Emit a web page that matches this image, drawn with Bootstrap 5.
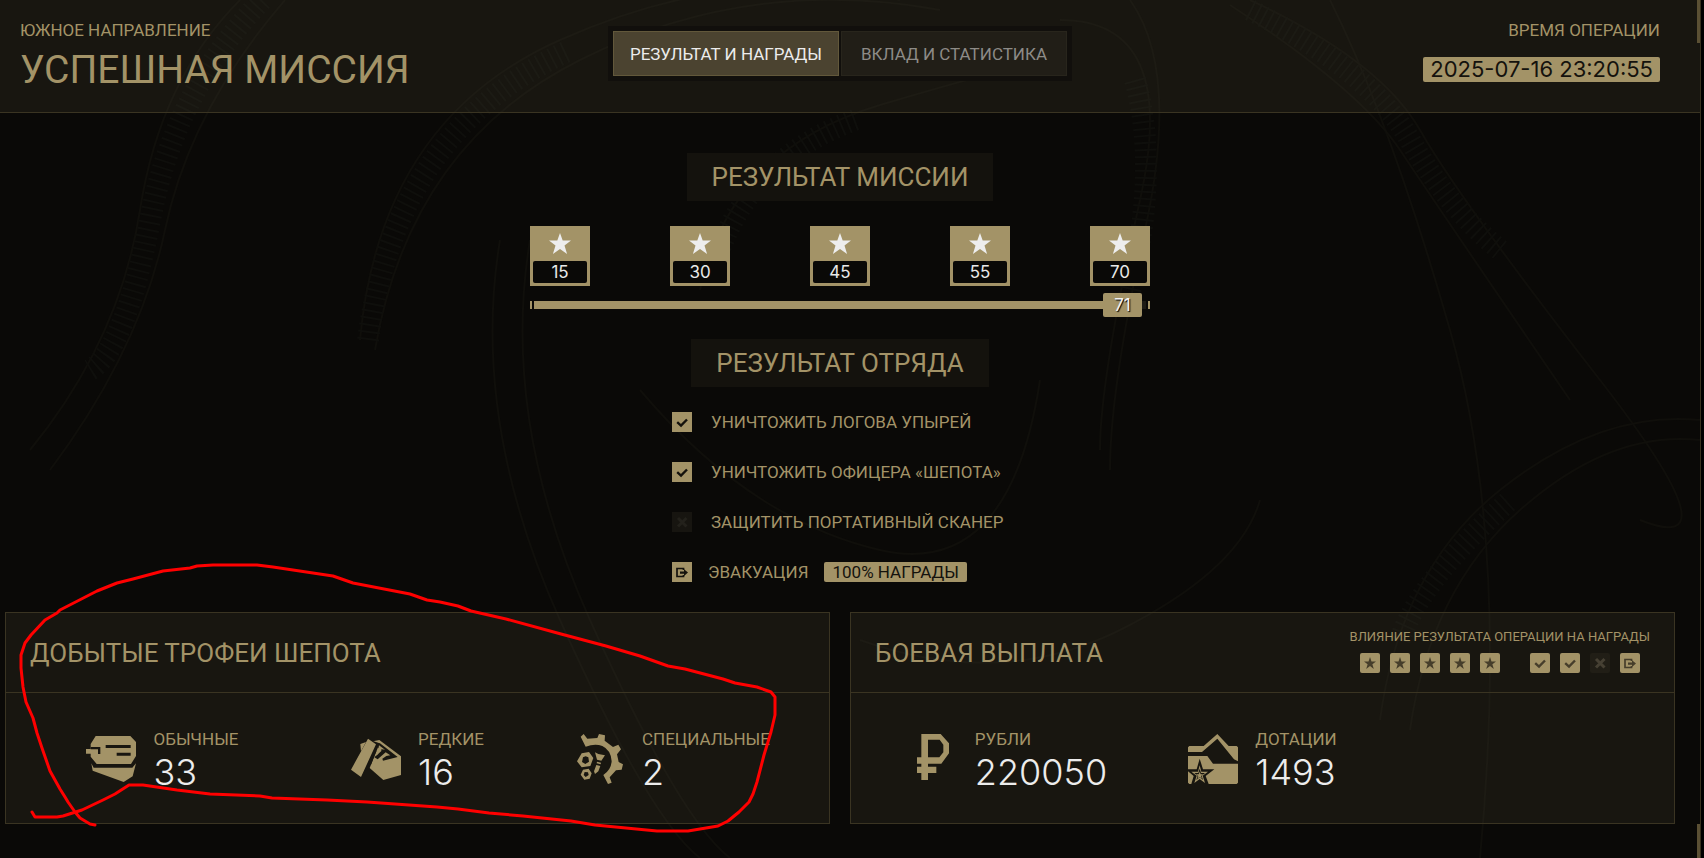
<!DOCTYPE html>
<html lang="ru" data-bs-theme="dark">
<head>
<meta charset="utf-8">
<meta name="viewport" content="width=device-width, initial-scale=1">
<title>Успешная миссия</title>
<link rel="stylesheet" href="https://cdn.jsdelivr.net/npm/bootstrap@5.3.0/dist/css/bootstrap.min.css">
<style>
:root { --tan:#a39367; --ink:#0a0907; --line:#3a3422; }
body { background:#000; color:var(--tan); font-family:Roboto,"Liberation Sans",sans-serif; font-size:17px; line-height:20px; }
h1, h2 { color:var(--tan); font-weight:400; }
.frame { background:var(--ink); border-right:1px solid #38311f; margin-right:3px; isolation:isolate; }
.scenery { z-index:-1; width:100%; height:100%; }
.edge { right:0; width:3px; background:#5b5034; }
.edge-top { top:0; height:43px; }
.edge-bottom { bottom:0; height:34px; }
.topbar { background:rgba(163,152,110,.09); border-bottom:1px solid var(--line); height:113px; padding:20px 40px 0 20px; }
.side { flex:1 1 0; }
.mission-name { font-size:39px; line-height:44px; font-weight:400; margin:8px 0 0; white-space:nowrap; }
.tabs { background:#110f0c; padding:5px; gap:2px; margin-top:6px; }
.tabs .btn { width:226px; height:45px; padding:0; border:1px solid #28251c; border-radius:0; background:#211e17; color:#8d8b87; font-size:17px; line-height:20px; }
.tabs .btn.active { background:#4b4330; border-color:#62583b; color:#ececec; }
.plate { background:var(--tan); color:#14120d; border-radius:2px; }
.digits { font-family:Inter,"Liberation Sans",sans-serif; }
.stamp { font-size:22px; line-height:25px; padding:0 7px; margin-top:17px; }
main { padding:40px 25px 33px 5px; }
.heading { background:#14120d; font-size:26px; line-height:48px; margin:0; padding:0 25px; }
.squad { margin-top:22px; }
.score { width:620px; }
.stars { margin-top:25px; }
.star-box { width:60px; height:60px; background:var(--tan); padding:0 3px 3px; }
.star-box svg { width:36px; height:35px; color:#ededed; }
.star-box span { background:var(--ink); color:#e9e9e9; border-radius:2px; height:22px; line-height:22px; }
.rail { height:24px; margin-top:7px; gap:2px; }
.tick { width:2px; height:8px; background:var(--tan); }
.rail .progress { height:8px; border-radius:0; background:#1d1b15; overflow:visible; }
.rail .progress-bar { background:var(--tan); overflow:visible; }
.marker { right:8px; top:0; width:39px; line-height:24px; color:#f2f2f2; text-shadow:1px 1px 1px #000; }
.goals { width:336px; gap:30px; margin-top:25px; }
.goals li { height:20px; white-space:nowrap; }
.goals .state { margin-right:19px; }
.state { width:20px; height:20px; background:var(--tan); color:#14120d; flex:none; display:block; }
.state.off { background:#171510; color:#23211b; }
.small-state { border-radius:2px; color:#463e2b; }
.small-state.off { background:#211e16; color:#464033; }
.panels { gap:20px; margin-top:30px; }
.panel { flex:1 1 0; background:rgba(163,152,110,.09); border:1px solid var(--line); height:212px; }
.panel-top { height:80px; border-bottom:1px solid var(--line); padding:0 24px; }
.panel-top h2 { font-size:26px; line-height:32px; margin:0; }
.effects { font-size:13px; line-height:16px; padding-bottom:4px; }
.icons { gap:10px; margin-top:8px; }
.icons .group-end { margin-right:20px; }
.loot { padding:36px 29px 0; }
.loot > div { flex:0 0 33.333%; gap:17px; }
.loot svg { width:50px; height:50px; margin-top:5px; flex:none; fill:var(--tan); }
.loot .cut { fill:#181610; }
.amount { font-size:36px; line-height:36px; color:#ececec; font-weight:300; margin-top:5px; }
.scribble { left:0; top:552px; pointer-events:none; }
</style>
</head>
<body>
<svg class="d-none" aria-hidden="true">
  <symbol id="star" viewBox="0 0 20 20"><path fill="currentColor" d="M10 4l1.500 4.400H16l-3.600 2.800 1.400 4.800L10 13.100 6.200 16l1.400-4.800L4 8.400h4.500z"/></symbol>
  <symbol id="bigstar" viewBox="0 0 36 35"><path fill="currentColor" d="M18 7l2.700 7.600H29l-6.500 5 2.600 8.400L18 23l-7.100 5 2.600-8.400-6.500-5h8.300z"/></symbol>
  <symbol id="check" viewBox="0 0 20 20"><path fill="none" stroke="currentColor" stroke-width="2.400" d="M5.200 10.200L9 13.600 15 7.500"/></symbol>
  <symbol id="cross" viewBox="0 0 20 20"><path fill="none" stroke="currentColor" stroke-width="3" d="M6 6l8.500 8.500M14.500 6L6 14.500"/></symbol>
  <symbol id="exit" viewBox="0 0 20 20"><path fill="none" stroke="currentColor" stroke-width="1.700" d="M11.500 8V6.500H5v8h6.500V13"/><path fill="currentColor" d="M8 9.500h4V7.300l4 3.300-4 3.300v-2.200H8z"/></symbol>
</svg>

<div class="frame position-relative min-vh-100">
  <svg class="scenery position-absolute top-0 start-0" viewBox="0 0 1700 858" preserveAspectRatio="xMidYMid slice" fill="none" aria-hidden="true">
    <g stroke="#100f0b" stroke-width="2">
      <path d="M240 0Q160 80 140 210T30 450M285 0Q190 110 165 230T50 470"/>
      <path d="M360 340Q380 120 560 40T900 0M375 350Q410 145 580 60T940 10"/>
      <path d="M700 290Q730 150 880 105T1060 60M1130 0Q1180 70 1145 230T1110 470"/>
      <path d="M1060 20Q1180 20 1140 200T1100 450M1330 0Q1390 120 1450 330T1480 858"/>
      <path d="M1250 0Q1380 60 1420 130T1600 380 1640 520M1230 5Q1360 90 1400 150T1570 400"/>
      <path d="M1380 720Q1400 570 1500 490T1700 420M1410 730Q1430 590 1520 510T1700 440"/>
      <path d="M500 240Q470 420 560 620T700 858M530 240Q500 420 590 620T730 858"/>
      <path d="M640 390Q750 520 880 550T1040 380M860 640Q1000 690 1120 630T1260 500"/>
    </g>
    <g stroke="#0f0f0c" stroke-width="22" stroke-dasharray="2 5">
      <path d="M262 0Q175 90 150 220T90 370M368 340Q395 130 570 50"/>
      <path d="M1250 10Q1370 70 1410 140T1500 250M1400 640Q1420 580 1510 500"/>
      <path d="M1135 80Q1160 170 1128 300M710 280Q740 160 860 118"/>
    </g>
  </svg>
  <div class="edge edge-top position-absolute"></div>
  <div class="edge edge-bottom position-absolute"></div>

  <header class="topbar d-flex align-items-start">
    <div class="side">
      <div>ЮЖНОЕ НАПРАВЛЕНИЕ</div>
      <h1 class="mission-name">УСПЕШНАЯ МИССИЯ</h1>
    </div>
    <div class="tabs d-flex">
      <button type="button" class="btn active" aria-current="page">РЕЗУЛЬТАТ И НАГРАДЫ</button>
      <button type="button" class="btn">ВКЛАД И СТАТИСТИКА</button>
    </div>
    <div class="side d-flex flex-column align-items-end">
      <div>ВРЕМЯ ОПЕРАЦИИ</div>
      <time class="plate stamp digits" datetime="2025-07-16T23:20:55">2025-07-16 23:20:55</time>
    </div>
  </header>

  <main>
    <div class="d-flex flex-column align-items-center">
      <h2 class="heading">РЕЗУЛЬТАТ МИССИИ</h2>
      <div class="score">
        <div class="stars d-flex justify-content-between">
          <div class="star-box d-flex flex-column justify-content-between"><svg class="mx-auto"><use href="#bigstar"/></svg><span class="digits text-center">15</span></div>
          <div class="star-box d-flex flex-column justify-content-between"><svg class="mx-auto"><use href="#bigstar"/></svg><span class="digits text-center">30</span></div>
          <div class="star-box d-flex flex-column justify-content-between"><svg class="mx-auto"><use href="#bigstar"/></svg><span class="digits text-center">45</span></div>
          <div class="star-box d-flex flex-column justify-content-between"><svg class="mx-auto"><use href="#bigstar"/></svg><span class="digits text-center">55</span></div>
          <div class="star-box d-flex flex-column justify-content-between"><svg class="mx-auto"><use href="#bigstar"/></svg><span class="digits text-center">70</span></div>
        </div>
        <div class="rail d-flex align-items-center position-relative">
          <div class="tick"></div>
          <div class="progress flex-grow-1" role="progressbar" aria-label="Результат миссии" aria-valuenow="71" aria-valuemin="0" aria-valuemax="72">
            <div class="progress-bar" style="width:98%"></div>
          </div>
          <div class="tick"></div>
          <span class="marker plate digits position-absolute text-center">71</span>
        </div>
      </div>
      <h2 class="heading squad">РЕЗУЛЬТАТ ОТРЯДА</h2>
      <ul class="goals list-unstyled d-flex flex-column mb-0">
        <li class="d-flex align-items-center"><svg class="state"><use href="#check"/></svg>УНИЧТОЖИТЬ ЛОГОВА УПЫРЕЙ</li>
        <li class="d-flex align-items-center"><svg class="state"><use href="#check"/></svg>УНИЧТОЖИТЬ ОФИЦЕРА «ШЕПОТА»</li>
        <li class="d-flex align-items-center"><svg class="state off"><use href="#cross"/></svg>ЗАЩИТИТЬ ПОРТАТИВНЫЙ СКАНЕР</li>
        <li class="d-flex align-items-center"><svg class="state me-3"><use href="#exit"/></svg>ЭВАКУАЦИЯ<span class="plate ms-3 px-2">100% НАГРАДЫ</span></li>
      </ul>
    </div>

    <div class="panels d-flex">
      <section class="panel">
        <div class="panel-top d-flex align-items-center"><h2>ДОБЫТЫЕ ТРОФЕИ ШЕПОТА</h2></div>
        <div class="loot d-flex">
          <div class="d-flex justify-content-center">
            <svg viewBox="0 0 150 150"><path d="M29 6H133L150 24V66L135 90H32L14 68V59H0V45H14V30zM16 88L23 101H139L150 88 140 127 113 144 20 110z"/><path class="cut" d="M59 33h75v9H59zM92 56h42v9H92zM14 39H43V60H36V46H14z"/></svg>
            <div><div>ОБЫЧНЫЕ</div><div class="amount digits">33</div></div>
          </div>
          <div class="d-flex justify-content-center">
            <svg viewBox="0 0 150 150"><path d="M28 30L45 24 30 52zM66 22L85 18 150 67V123L97 138 56 102 76 52z"/><path class="cut" d="M64 20L86 28 60 92 50 96zM86 27L140 69 96 80 94 74 106 66 118 64 104 55 80 76 70 70 92 50 80 40z"/><path d="M51 14L75 31 30 129 0 107zM84 34L102 47 92 46 76 66 82 46z"/></svg>
            <div><div>РЕДКИЕ</div><div class="amount digits">16</div></div>
          </div>
          <div class="d-flex justify-content-center">
            <svg viewBox="0 0 150 150"><path d="M17 8L26 0 37 14 67 12 72 0 90 4 89 20 114 39 130 32 138 46 126 61 131 84 144 91 140 107 123 109 104 130 110 146 99 150 85 123Q108 108 110 82 108 48 82 36 60 28 32 38z"/><path fill-rule="evenodd" d="M20 58L42 54 55 72 46 96 20 100 6 82zM24 70L21 84 31 90 42 83 40 70 32 67zM24 107L41 104 50 118 44 134 28 137 17 122zM29 114L26 123 32 129 41 123 39 115z"/><path d="M60 55L70 60 90 64 79 80 66 77zM66 83L78 86 77 91 65 88zM64 93L76 96 70 112 60 120 57 112z"/></svg>
            <div><div>СПЕЦИАЛЬНЫЕ</div><div class="amount digits">2</div></div>
          </div>
        </div>
      </section>

      <section class="panel">
        <div class="panel-top d-flex align-items-center justify-content-between">
          <h2>БОЕВАЯ ВЫПЛАТА</h2>
          <div class="effects text-center">
            <div>ВЛИЯНИЕ РЕЗУЛЬТАТА ОПЕРАЦИИ НА НАГРАДЫ</div>
            <div class="icons d-flex justify-content-center">
              <svg class="state small-state"><use href="#star"/></svg>
              <svg class="state small-state"><use href="#star"/></svg>
              <svg class="state small-state"><use href="#star"/></svg>
              <svg class="state small-state"><use href="#star"/></svg>
              <svg class="state small-state group-end"><use href="#star"/></svg>
              <svg class="state small-state"><use href="#check"/></svg>
              <svg class="state small-state"><use href="#check"/></svg>
              <svg class="state small-state off"><use href="#cross"/></svg>
              <svg class="state small-state"><use href="#exit"/></svg>
            </div>
          </div>
        </div>
        <div class="loot d-flex">
          <div class="d-flex justify-content-center">
            <svg viewBox="0 0 150 150"><path fill-rule="evenodd" d="M40 0H98L123 28V58L100 89H60V98H85V117H60V138H40V117H27V98H40V89H27V70H40zM60 17V70H94L106 55V32L95 17z"/></svg>
            <div><div>РУБЛИ</div><div class="amount digits">220050</div></div>
          </div>
          <div class="d-flex justify-content-center">
            <svg viewBox="0 0 150 150"><path d="M4 36H47L88 0 122 36H146L150 40V82L138 76 88 14 42 54H0V40zM0 66H58L75 89H150V146L146 150H4L0 146z"/><path class="cut" d="M35 74L45 106H79L53 126 62 150H10L17 126 0 112V106H26z"/><path d="M35 94L40 113H60L44 125 51 147 35 135 19 147 26 125 10 113H30z"/><path class="cut" d="M35 104L39 117H51L41 125 45 138 35 130 25 138 29 125 19 117H31z"/><path d="M35 113l3 8h8l-7 5 3 8-7-5-7 5 3-8-7-5h8z"/></svg>
            <div><div>ДОТАЦИИ</div><div class="amount digits">1493</div></div>
          </div>
        </div>
      </section>
    </div>
  </main>

  <svg class="scribble position-absolute" width="800" height="290" viewBox="0 552 800 290" fill="none" stroke="#f00" stroke-width="3" stroke-linejoin="round" stroke-linecap="round" aria-hidden="true">
    <path d="M95 825L90 824 80 818 75 812 68 802 65 797 60 789 50 771 42 748 37 733 33 718 26 702 23 687 21 668 21 655 25 643 31 635 45 620 57 613 60 610 97 591 117 583 133 579 163 571 190 568 197 566 213 565H257L273 567 333 576 353 583 410 594 427 600 440 602 458 606 471 611 506 619 561 634 606 646 640 656 668 666 685 669 723 679 735 683 757 687 771 692 775 697V715L771 732 764 755 757 782 753 794 749 802 739 812 728 821 718 826 688 831H657L595 825 571 821 523 816 489 813 458 809 437 807 367 802 327 800 272 798 260 796 210 794 177 790 143 785H129L115 794 103 800 82 810 63 816 57 817H35L32 812"/>
  </svg>
</div>
<script src="https://cdn.jsdelivr.net/npm/bootstrap@5.3.0/dist/js/bootstrap.bundle.min.js"></script>
</body>
</html>
